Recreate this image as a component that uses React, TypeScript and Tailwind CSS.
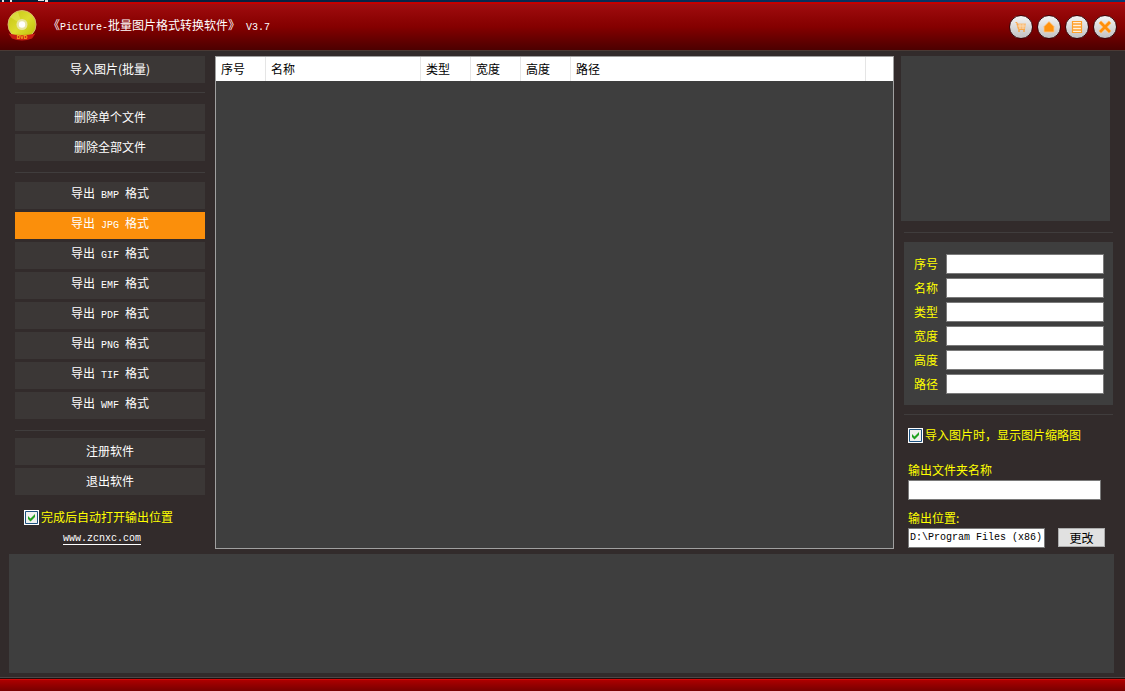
import { useState } from "react";
import type { ReactNode } from "react";

const fileActions = ["删除单个文件", "删除全部文件"];
const formats = ["BMP", "JPG", "GIF", "EMF", "PDF", "PNG", "TIF", "WMF"];
const appActions = ["注册软件", "退出软件"];
const fields = ["序号", "名称", "类型", "宽度", "高度", "路径"];

const columns = [
  { title: "序号", width: "w-[50px]" },
  { title: "名称", width: "w-[155px]" },
  { title: "类型", width: "w-[50px]" },
  { title: "宽度", width: "w-[50px]" },
  { title: "高度", width: "w-[50px]" },
  { title: "路径", width: "" },
];

function Latin({ children }: { children: ReactNode }) {
  return <span className="font-['Liberation_Mono',monospace] text-[10px]">{children}</span>;
}

function Divider() {
  return <hr className="h-px border-0 bg-[#403d3d]" />;
}

function MenuButton({ active, onClick, children }: { active?: boolean; onClick?: () => void; children: ReactNode }) {
  return (
    <button
      type="button"
      onClick={onClick}
      className={`flex h-[27px] w-full items-center justify-center pb-0.5 whitespace-pre text-white ${active ? "bg-[#fb8f0b]" : "bg-[#3b3736]"}`}
    >
      <span>{children}</span>
    </button>
  );
}

function CheckBox({ label }: { label: string }) {
  return (
    <label className="flex items-center gap-0.5 text-[#ffff00]">
      <span className="relative size-[15px] shrink-0">
        <input
          type="checkbox"
          defaultChecked
          className="peer block size-[15px] appearance-none border border-white bg-[#f0f0ee]"
        />
        <svg viewBox="0 0 15 15" className="pointer-events-none absolute inset-0">
          <path d="M1.500 1.500h12v12h-12z" fill="none" stroke="#1c5180" />
        </svg>
        <svg viewBox="0 0 15 15" className="pointer-events-none absolute inset-0 hidden peer-checked:block">
          <path d="M4 6v3l2.500 2.500L11 7V4L6.500 8.500z" fill="#21a121" />
        </svg>
      </span>
      {label}
    </label>
  );
}

function Logo() {
  return (
    <svg viewBox="0 0 32 32" className="size-8">
      <defs>
        <linearGradient id="disc" x1="0" y1="0" x2="1" y2="1">
          <stop offset="0" stopColor="#c5c410" />
          <stop offset=".5" stopColor="#dddc30" />
          <stop offset="1" stopColor="#b9b900" />
        </linearGradient>
      </defs>
      <circle cx="16" cy="14.500" r="14" fill="url(#disc)" stroke="#d9b86a" />
      <path d="M16 14.500 4 7a15 15 0 0 1 8-5z" fill="#f1ef74" opacity=".4" />
      <circle cx="16" cy="14.500" r="5.500" fill="#e8e5a0" />
      <circle cx="16" cy="14.500" r="3.200" fill="#fff" />
      <path d="M2.500 23.500q13.500 3 27 0L26 28.500q-10 4-20 0z" fill="#c81c14" />
      <text x="16" y="28.500" textAnchor="middle" fill="#ffbd20" className="font-['Liberation_Sans',sans-serif] text-[5px] font-bold">
        DVD
      </text>
    </svg>
  );
}

function RoundButton({ label, children }: { label: string; children: ReactNode }) {
  return (
    <button
      type="button"
      aria-label={label}
      className="size-6 rounded-full border border-[#38070a] bg-linear-to-b from-[#f4f4f4] to-[#c2c2c2]"
    >
      <svg viewBox="0 0 22 22" className="size-[22px]">
        {children}
      </svg>
    </button>
  );
}

function TitleBar() {
  return (
    <header className="flex h-12 items-center border-t-2 border-t-[#c40000] bg-linear-to-b from-[#a00d0f] via-[#840000] to-[#4c0000] pr-2 pb-0.5 pl-1.5">
      <Logo />
      <h1 className="ml-2.5 flex-1 whitespace-pre text-white">
        《<Latin>Picture-</Latin>批量图片格式转换软件》<Latin> V3.7</Latin>
      </h1>
      <div className="flex gap-1 pt-0.5">
        <RoundButton label="购买">
          <path d="M6 7.500h10l-1 5.500H8z" fill="#f9bd78" />
          <path d="M5.500 6.500H7l1.500 7H15" fill="none" stroke="#f8a64a" />
          <path d="M7.500 10h8M10 8v5M13 8v5" stroke="#fbe3c5" strokeWidth=".7" />
          <path d="M8 15h2M13 15h2" stroke="#f8a64a" strokeWidth="1.500" />
        </RoundButton>
        <RoundButton label="主页">
          <path d="M11 5.500l5.500 5.500H16v5H6v-5h-.5z" fill="#ff930f" stroke="#ffc98a" strokeWidth=".8" />
        </RoundButton>
        <RoundButton label="菜单">
          <path d="M6.500 5.500h9v11h-9z" fill="#fff0dc" stroke="#ffa02b" strokeWidth="1.200" />
          <path d="M7 8h8M7 11h8M7 14h8" stroke="#ffa02b" strokeWidth="1.500" />
        </RoundButton>
        <RoundButton label="关闭">
          <path d="M6 6l10 10M16 6L6 16" stroke="#ffd29c" strokeWidth="4" />
          <path d="M6 6l10 10M16 6L6 16" stroke="#ff900a" strokeWidth="2.800" />
        </RoundButton>
      </div>
    </header>
  );
}

function Sidebar() {
  const [format, setFormat] = useState("JPG");

  return (
    <nav className="w-[190px] shrink-0">
      <MenuButton>导入图片(批量)</MenuButton>
      <div className="pt-[9px] pb-[11px]">
        <Divider />
      </div>
      <div className="flex flex-col gap-[3px]">
        {fileActions.map((action) => (
          <MenuButton key={action}>{action}</MenuButton>
        ))}
      </div>
      <div className="pt-[11px] pb-[9px]">
        <Divider />
      </div>
      <div className="flex flex-col gap-[3px]">
        {formats.map((name) => (
          <MenuButton key={name} active={name === format} onClick={() => setFormat(name)}>
            导出<Latin> {name} </Latin>格式
          </MenuButton>
        ))}
      </div>
      <div className="pt-[11px] pb-[7px]">
        <Divider />
      </div>
      <div className="flex flex-col gap-[3px]">
        {appActions.map((action) => (
          <MenuButton key={action}>{action}</MenuButton>
        ))}
      </div>
      <div className="mt-3.5 ml-[9px]">
        <CheckBox label="完成后自动打开输出位置" />
      </div>
      <a
        href="#"
        className="mt-2 ml-12 block w-fit border-b border-white font-['Liberation_Mono',monospace] text-[10px] leading-[11px] text-white"
      >
        www.zcnxc.com
      </a>
    </nav>
  );
}

function FileTable() {
  return (
    <section className="min-w-0 flex-1 border border-[#a0a0a0] bg-[#3e3e3e]">
      <table className="w-full table-fixed border-separate border-spacing-0 bg-white text-black">
        <thead>
          <tr className="h-6">
            {columns.map((column) => (
              <th key={column.title} className={`border-r border-[#e5e5e5] p-0 pl-[5px] text-left font-normal ${column.width}`}>
                {column.title}
              </th>
            ))}
            <th className="w-[27px] p-0" />
          </tr>
        </thead>
      </table>
    </section>
  );
}

function DetailPanel() {
  return (
    <aside className="w-[212px] shrink-0 text-[#ffff00]">
      <div className="mr-[3px] h-[165px] bg-[#3e3e3e]" />
      <div className="ml-[3px]">
        <div className="pt-[11px] pb-[9px]">
          <Divider />
        </div>
        <div className="flex flex-col gap-1 bg-[#3e3e3e] pt-3 pr-[9px] pb-[11px] pl-2.5">
          {fields.map((field) => (
            <label key={field} className="flex items-center gap-2">
              <span className="w-6 shrink-0">{field}</span>
              <input className="h-5 min-w-0 flex-1 border border-[#7a7a7a] bg-white px-0.5 text-black" />
            </label>
          ))}
        </div>
        <div className="pt-[9px] pb-3">
          <Divider />
        </div>
        <div className="pr-2 pl-1">
          <CheckBox label="导入图片时，显示图片缩略图" />
          <label className="mt-[19px] block">
            输出文件夹名称
            <input className="mt-0.5 block h-5 w-[193px] border border-[#7a7a7a] bg-white px-0.5 text-black" />
          </label>
          <div className="mt-2.5 flex items-end justify-between">
            <label>
              输出位置:
              <input
                defaultValue="D:\Program Files (x86)"
                className="mt-0.5 block h-5 w-[137px] border border-[#7a7a7a] bg-white px-px pb-0.5 font-['Liberation_Mono',monospace] text-[10px] text-black"
              />
            </label>
            <button type="button" className="mb-px h-[19px] w-[47px] border border-[#adadad] bg-[#e1e1e1] leading-4 text-black">
              更改
            </button>
          </div>
        </div>
      </div>
    </aside>
  );
}

export default function App() {
  return (
    <div className="flex min-h-screen flex-col bg-[#322b2b] font-['Noto_Sans_CJK_SC',sans-serif] text-[12px] leading-4">
      <div className="flex h-0.5 bg-linear-to-r from-[#061a33] to-[#073a70]">
        <svg viewBox="0 0 60 2" className="h-0.5 w-[60px]">
          <path d="M2 0h2v2H2zM10 0h2v2h-2zM38 0h6v1h-6zM45 0h3v2h-3z" fill="#e6e6e6" />
        </svg>
      </div>
      <TitleBar />
      <main className="flex flex-1 border-t border-[#4a3a35] pt-[5px] pr-3 pl-[15px]">
        <Sidebar />
        <div className="ml-2.5 flex min-w-0 flex-1 gap-[7px]">
          <FileTable />
          <DetailPanel />
        </div>
      </main>
      <div className="mt-[5px] mr-[11px] mb-1 ml-[9px] h-[119px] bg-[#3e3e3e]" />
      <footer className="border-t border-[#4c4848] bg-[#250a0a] pt-px">
        <div className="h-3 border-t border-t-[#d00808] bg-linear-to-b from-[#ad0000] to-[#780000]" />
      </footer>
    </div>
  );
}
